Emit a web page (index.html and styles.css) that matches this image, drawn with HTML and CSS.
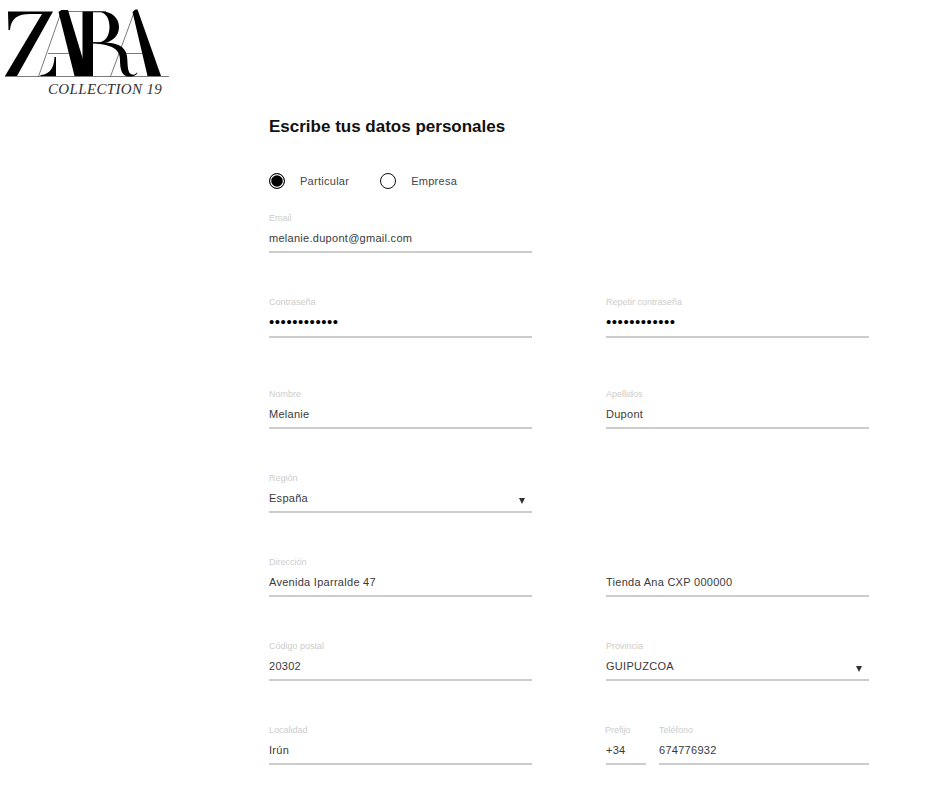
FILE: index.html
```html
<!DOCTYPE html>
<html lang="es">
<head>
<meta charset="utf-8">
<title>Escribe tus datos personales</title>
<link rel="stylesheet" href="styles.css">
</head>
<body>
<header class="brand">
  <svg class="logo" viewBox="0 0 170 80" width="170" height="80" role="img" aria-label="ZARA">
    <path d="M8 11.500H53L17 76H5L42 14H30C18 14 11 18 10 30H8.500Z" fill="#000"/>
    <path d="M40 76H56V57H54.500C54 68 50 74 41 75Z" fill="#000"/>
    <path d="M38.500 76.500L61.500 11M48 53.500H75M125 53.500H142M110.500 76.500L135 10M5 76.500H169M67 11.500H106" stroke="#222" stroke-width=".6" fill="none"/>
    <path d="M58.500 12L61.500 10H68L88 76H74.500Z" fill="#000"/>
    <path d="M82.500 11.500H93V76H82.500Z" fill="#000"/>
    <path d="M93 11.500H102C112 11.500 119 18 119 27C119 36 112 42 104 43H93V42.300H100C106 41 109.500 35 109.500 27C109.500 20 107 14 101 12.300H93Z" fill="#000"/>
    <path d="M93 42.600H104C116 43 125.500 46 127 56C128 66 127 73 132 74.500C134 75 136 74 137 72.500L137.500 73C135.500 76 132 77 128 76.500C122 75.500 120 70 120 60C120 50 113 44.500 93 43.600Z" fill="#000"/>
    <path d="M132.500 12L135.500 9.500H137.500L161 76H147.500Z" fill="#000"/>
  </svg>
  <p class="tagline">COLLECTION 19</p>
</header>
<main class="form">
  <h1 class="title">Escribe tus datos personales</h1>
  <div class="account-types">
    <label class="choice"><span class="radio radio-on"></span><span>Particular</span></label>
    <label class="choice"><span class="radio"></span><span>Empresa</span></label>
  </div>
  <div class="grid">
    <div class="field"><span class="label">Email</span><span class="value">melanie.dupont@gmail.com</span></div>
    <div></div>
    <div class="field field-pass"><span class="label">Contraseña</span><span class="value dots">••••••••••••</span></div>
    <div class="field field-pass"><span class="label">Repetir contraseña</span><span class="value dots">••••••••••••</span></div>
    <div class="field field-name"><span class="label">Nombre</span><span class="value">Melanie</span></div>
    <div class="field field-name"><span class="label">Apellidos</span><span class="value">Dupont</span></div>
    <div class="field"><span class="label">Región</span><span class="value">España</span><span class="caret"></span></div>
    <div></div>
    <div class="field"><span class="label">Dirección</span><span class="value">Avenida Iparralde 47</span></div>
    <div class="field"><span class="label">&nbsp;</span><span class="value">Tienda Ana CXP 000000</span></div>
    <div class="field"><span class="label">Código postal</span><span class="value">20302</span></div>
    <div class="field"><span class="label">Provincia</span><span class="value">GUIPUZCOA</span><span class="caret"></span></div>
    <div class="field"><span class="label">Localidad</span><span class="value">Irún</span></div>
    <div class="phone">
      <div class="field"><span class="label label-prefix">Prefijo</span><span class="value">+34</span></div>
      <div class="field"><span class="label">Teléfono</span><span class="value">674776932</span></div>
    </div>
  </div>
</main>
</body>
</html>
```
FILE: styles.css
```css
* { box-sizing: border-box; }
html, body { margin: 0; padding: 0; background: #fff; }
body { font-family: "Liberation Sans", Arial, sans-serif; color: #333; height: 799px; overflow: hidden; }
.brand { height: 113px; }
.logo { display: block; }
.tagline { margin: 1px 0 0 48px; font: italic 15px/16px "Liberation Serif", serif; color: #333; letter-spacing: .35px; }
.form { margin-left: 269px; width: 600px; }
.title { margin: 0; font-size: 17px; line-height: 28px; font-weight: 700; color: #111; }
.account-types { display: flex; gap: 31px; margin-top: 25px; height: 30px; align-items: center; }
.choice { display: flex; align-items: center; gap: 15px; font-size: 11px; letter-spacing: .27px; color: #444; }
.radio { width: 16px; height: 16px; border: 1px solid #111; border-radius: 50%; display: block; background: #fff; }
.radio-on { background: #000; box-shadow: inset 0 0 0 1.2px #fff; }
.grid { display: grid; grid-template-columns: 263px 263px; column-gap: 74px; row-gap: 43px; margin-top: 16px; }
.field { display: flex; flex-direction: column; height: 41px; padding-top: 1px; border-bottom: 2px solid #ccc; position: relative; }
.field-pass { height: 42px; }
.field-name { margin-top: 7px; }
.label { font-size: 9px; line-height: 11px; color: #ccc; }
.label-prefix { margin-left: -1px; }
.value { font-size: 11px; line-height: 14px; margin-top: 7px; color: #3a3a3a; letter-spacing: .28px; }
.dots { font-size: 15px; color: #000; letter-spacing: .55px; }
.caret { position: absolute; right: 7px; bottom: 7px; width: 0; height: 0; border-left: 3px solid transparent; border-right: 3px solid transparent; border-top: 6px solid #333; }
.phone { display: grid; grid-template-columns: 40px 210px; column-gap: 13px; }
```
